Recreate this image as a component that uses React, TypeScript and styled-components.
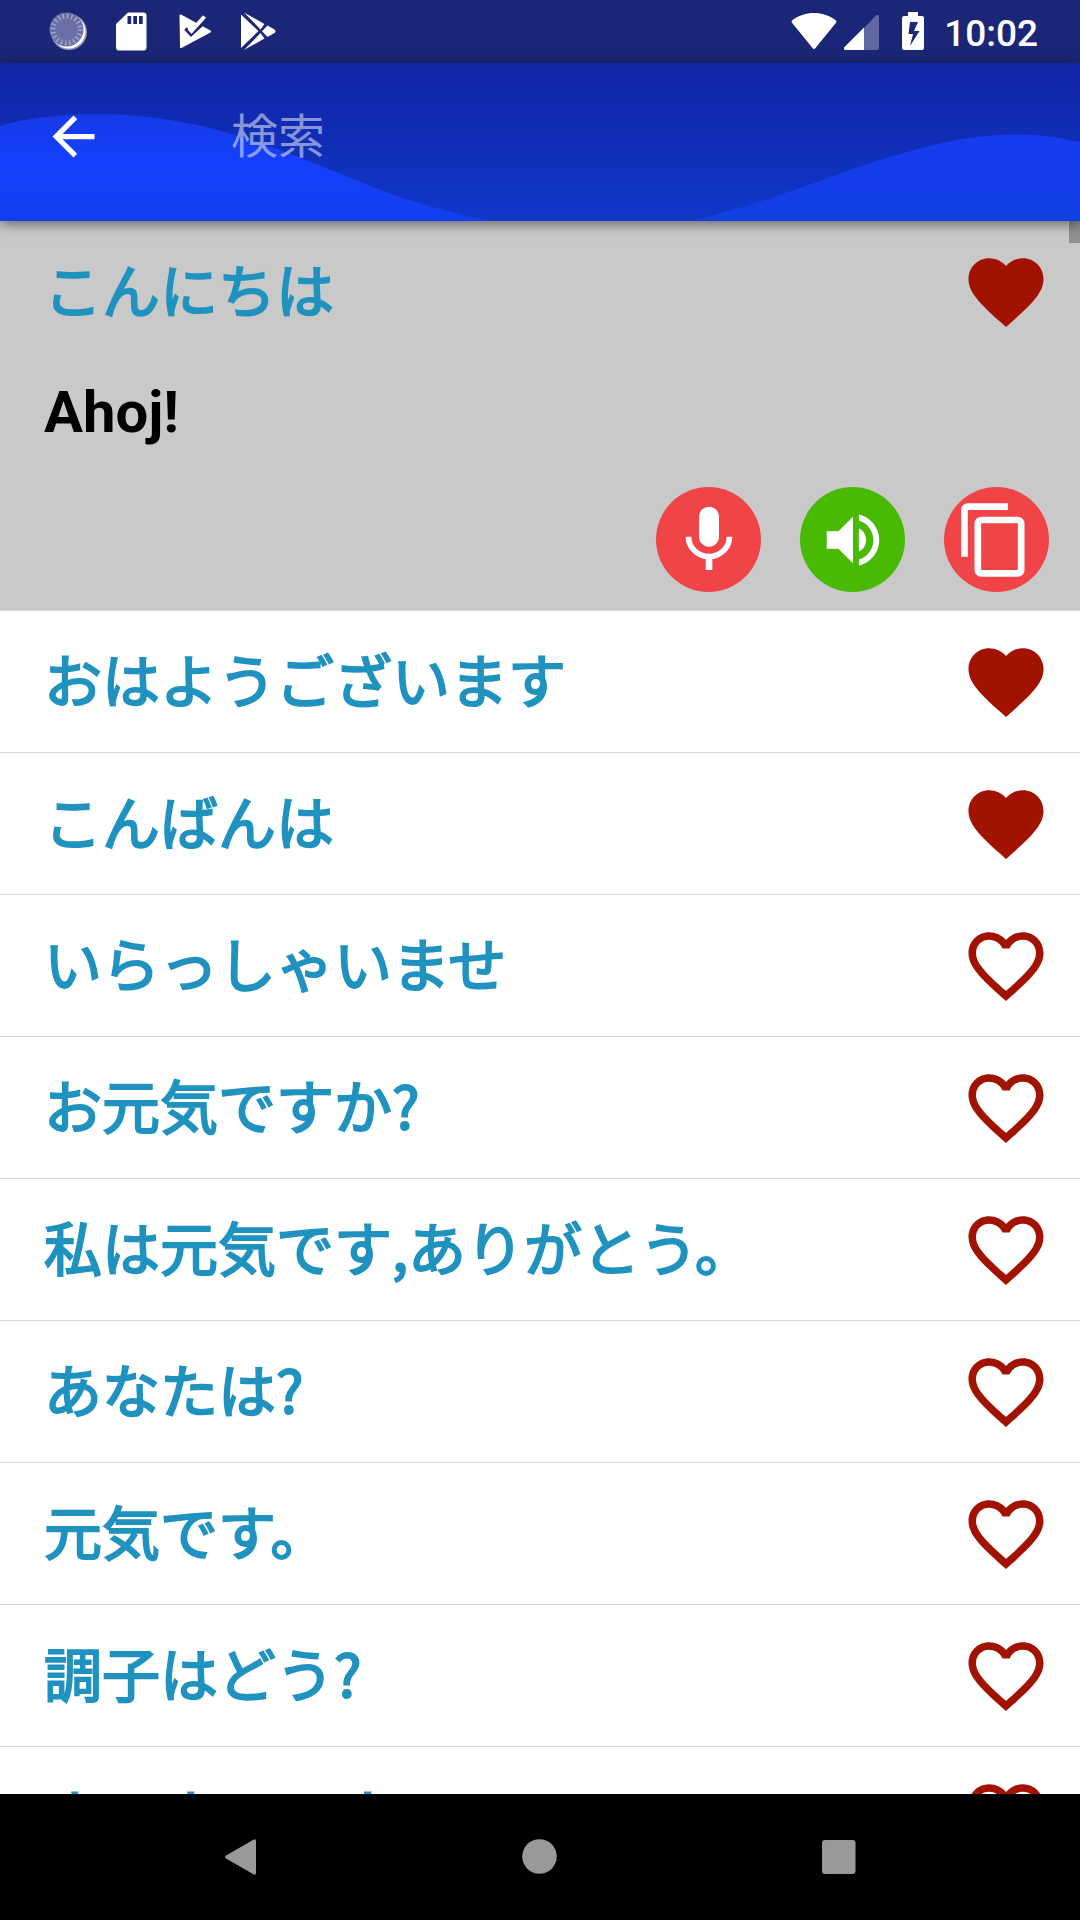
import React, { useState } from "react";
import styled, { createGlobalStyle } from "styled-components";

const GlobalStyle = createGlobalStyle`
  *, *::before, *::after { box-sizing: border-box; }
  body {
    margin: 0;
    background: #000;
    font-family: Roboto, "Noto Sans CJK JP", sans-serif;
  }
  button {
    margin: 0;
    padding: 0;
    border: 0;
    background: none;
    font: inherit;
    color: inherit;
    cursor: pointer;
  }
  svg { display: block; flex: none; }
`;

const Screen = styled.div`
  display: flex;
  flex-direction: column;
  height: 100vh;
  overflow: hidden;
  background: #fff;
`;

const StatusBar = styled.div`
  display: flex;
  flex: none;
  justify-content: space-between;
  align-items: center;
  height: 63px;
  padding: 0 42px 0 37px;
  background: #1b2676;
  color: #fff;
`;

const StatusGroup = styled.div<{ $gap: number }>`
  display: flex;
  align-items: center;
  gap: ${(p) => p.$gap}px;
`;

const Clock = styled.time`
  padding-top: 4px;
  font-size: 37px;
  line-height: 44px;
  font-weight: 500;
`;

const AppBar = styled.header`
  position: relative;
  z-index: 2;
  flex: none;
  height: 158px;
  background: linear-gradient(#1024a6, #1137c8);
  box-shadow: 0 3px 12px rgba(0, 0, 0, 0.5);
`;

const Wave = styled.svg`
  position: absolute;
  inset: 0;
  width: 100%;
  height: 100%;
`;

const Toolbar = styled.div`
  position: relative;
  display: flex;
  align-items: center;
  gap: 126px;
  height: 147px;
  padding: 0 42px;
`;

const SearchInput = styled.input`
  flex: 1;
  min-width: 0;
  height: 84px;
  padding: 0 0 8px;
  border: 0;
  outline: 0;
  background: transparent;
  color: #fff;
  font-family: "Noto Sans CJK JP", sans-serif;
  font-size: 47px;
  &::placeholder { color: rgba(255, 255, 255, 0.5); opacity: 1; }
`;

const ListArea = styled.main`
  position: relative;
  flex: 1;
  min-height: 0;
  overflow: hidden;
`;

const PhraseList = styled.ul`
  margin: 0;
  padding: 0;
  list-style: none;
`;

const PhraseItem = styled.li<{ $open: boolean }>`
  border-bottom: 1px solid #d7d7d7;
  background: ${(p) => (p.$open ? "#c9c9c9" : "#fff")};
`;

const PhraseRow = styled.div`
  display: flex;
  align-items: center;
  justify-content: space-between;
  height: 141px;
  padding: 0 29px 0 44px;
`;

const PhraseButton = styled.button`
  flex: 1;
  padding-bottom: 8px;
  text-align: left;
  color: #2092bf;
  font-family: "Noto Sans CJK JP", sans-serif;
  font-size: 58px;
  line-height: 84px;
  font-weight: 400;
  -webkit-text-stroke: 2px #2092bf;
`;

const Translation = styled.p`
  margin: 0;
  padding: 16px 44px 0;
  color: #000;
  font-size: 58px;
  line-height: 68px;
  font-weight: 700;
`;

const Actions = styled.div`
  display: flex;
  justify-content: flex-end;
  gap: 39px;
  padding: 41px 31px 18px;
`;

const RoundButton = styled.button<{ $color: string }>`
  display: grid;
  place-items: center;
  width: 105px;
  height: 105px;
  border-radius: 50%;
  background: ${(p) => p.$color};
`;

const ScrollThumb = styled.div`
  position: absolute;
  top: 0;
  right: 0;
  width: 11px;
  height: 22px;
  background: #909090;
`;

const NavBar = styled.nav`
  display: flex;
  flex: none;
  height: 126px;
  padding: 0 92px;
  background: #000;
`;

const NavButton = styled.button`
  display: grid;
  flex: 1;
  place-items: center;
`;

const HEART_FULL =
  "M12 21.35l-1.45-1.32C5.4 15.36 2 12.28 2 8.5 2 5.42 4.42 3 7.5 3c1.74 0 3.41.81 4.5 2.09C13.09 3.81 14.76 3 16.5 3 19.58 3 22 5.42 22 8.5c0 3.78-3.4 6.86-8.55 11.54L12 21.35z";
const HEART_OUTLINE =
  "M16.5 3c-1.74 0-3.41.81-4.5 2.09C10.91 3.81 9.24 3 7.5 3 4.42 3 2 5.42 2 8.5c0 3.78 3.4 6.86 8.55 11.54L12 21.35l1.45-1.32C18.6 15.36 22 12.28 22 8.5 22 5.42 19.58 3 16.5 3zm-4.4 15.55l-.1.1-.1-.1C7.14 14.24 4 11.39 4 8.5 4 6.5 5.5 5 7.5 5c1.54 0 3.04.99 3.57 2.36h1.87C13.46 5.99 14.96 5 16.5 5c2 0 3.5 1.5 3.5 3.5 0 2.89-3.14 5.74-7.9 10.05z";
const MIC =
  "M12 14c1.66 0 2.99-1.34 2.99-3L15 5c0-1.66-1.34-3-3-3S9 3.34 9 5v6c0 1.66 1.34 3 3 3zm5.3-3c0 3-2.54 5.1-5.3 5.1S6.7 14 6.7 11H5c0 3.41 2.72 6.23 6 6.72V21h2v-3.28c3.28-.48 6-3.3 6-6.72h-1.7z";
const VOLUME =
  "M3 9v6h4l5 5V4L7 9H3zm13.5 3c0-1.77-1.02-3.29-2.5-4.03v8.05c1.48-.73 2.5-2.25 2.5-4.02zM14 3.23v2.06c2.89.86 5 3.54 5 6.71s-2.11 5.85-5 6.71v2.06c4.01-.91 7-4.49 7-8.77s-2.99-7.86-7-8.77z";
const COPY =
  "M16 1H4c-1.1 0-2 .9-2 2v14h2V3h12V1zm3 4H8c-1.1 0-2 .9-2 2v14c0 1.1.9 2 2 2h11c1.1 0 2-.9 2-2V7c0-1.1-.9-2-2-2zm0 16H8V7h11v14z";
const BACK = "M20 11H7.83l5.59-5.59L12 4l-8 8 8 8 1.41-1.41L7.83 13H20v-2z";

type IconProps = { path: string; size: number; color?: string; viewBox?: string };

const Icon = ({ path, size, color = "#fff", viewBox = "0 0 24 24" }: IconProps) => (
  <svg width={size} height={size} viewBox={viewBox} fill={color} aria-hidden="true">
    <path d={path} />
  </svg>
);

const SyncIcon = () => (
  <svg width="63" height="63" viewBox="0 0 63 63" aria-hidden="true">
    <circle cx="32" cy="32" r="18" fill="#8f95bd" />
    <circle cx="31.5" cy="31.5" r="17" fill="#fff" />
    <circle cx="29.5" cy="29.5" r="17" fill="#6a70a5" />
    <circle cx="29.5" cy="29.5" r="13.5" fill="none" stroke="#a4a8c9" strokeWidth="5" strokeDasharray="1.4 2.84" />
  </svg>
);

const CardIcon = () => (
  <svg width="63" height="63" viewBox="0 0 63 63" aria-hidden="true">
    <path
      fill="#fff"
      fillRule="evenodd"
      d="M28 12.5H43.5a3 3 0 0 1 3 3V47.5a3 3 0 0 1-3 3H19a3 3 0 0 1-3-3V24zM27.5 16v8h3.7v-8zM33.3 16v8h3.7v-8zM39 16v8h3.7v-8z"
    />
  </svg>
);

const PlayCheckIcon = () => (
  <svg width="63" height="63" viewBox="0 0 63 63" aria-hidden="true">
    <path d="M17.5 15.5L47 31.5 18 47z" fill="#fff" stroke="#fff" strokeWidth="2" strokeLinejoin="round" />
    <path d="M33 22L45 12 50 26 42 26z" fill="#1b2676" />
    <path d="M22.5 28.5L28 34.5 44.5 19.5" fill="none" stroke="#1b2676" strokeWidth="3.5" />
    <path d="M26 28L28.5 31 41.5 16.5" fill="none" stroke="#fff" strokeWidth="4" />
  </svg>
);

const PlayIcon = () => (
  <svg width="63" height="63" viewBox="0 0 63 63" aria-hidden="true">
    <path d="M15 14.5L32.5 31 15 48z" fill="#fff" />
    <path d="M18 12.5L38.5 24 34.5 29.5zM18 50L38.5 38.5 34.5 33z" fill="#fff" />
    <path d="M41.5 25.5L48.5 29.5Q50.5 31.2 48.5 33L41.5 37 36 31.2z" fill="#fff" />
  </svg>
);

const WifiIcon = () => (
  <svg width="46" height="63" viewBox="0 0 46 63" aria-hidden="true">
    <path fill="#fff" d="M1 20.5C13 10.500 33 10.5 45 20.5Q46 21.5 45 22.8L24.5 48Q23 50 21.5 48L1 22.8Q0 21.500 1 20.5z" />
  </svg>
);

const SignalIcon = () => (
  <svg width="35" height="63" viewBox="0 0 35 63" aria-hidden="true">
    <path fill="#6067a1" d="M20 28L31.5 16Q35 13 35 17V48Q35 50 33 50H20z" />
    <path fill="#fff" d="M20 27.5V50H1.5Q-1 49.5 .5 47z" />
  </svg>
);

const BatteryIcon = () => (
  <svg width="51" height="63" viewBox="0 0 51 63" aria-hidden="true">
    <path
      fill="#fff"
      fillRule="evenodd"
      d="M22 12h10v4h4q2 0 2 2v30q0 2-2 2H18q-2 0-2-2V18q0-2 2-2h4zM24 22L22.5 34H27L24 46 33.5 31H28L32 22z"
    />
  </svg>
);

type Phrase = { text: string; translation?: string; favorite: boolean };

const PHRASES: Phrase[] = [
  { text: "こんにちは", translation: "Ahoj!", favorite: true },
  { text: "おはようございます", favorite: true },
  { text: "こんばんは", favorite: true },
  { text: "いらっしゃいませ", favorite: false },
  { text: "お元気ですか?", favorite: false },
  { text: "私は元気です,ありがとう。", favorite: false },
  { text: "あなたは?", favorite: false },
  { text: "元気です。", favorite: false },
  { text: "調子はどう?", favorite: false },
  { text: "まぁまぁです。", favorite: false },
];

export default function App() {
  const [favorites, setFavorites] = useState(PHRASES.map((p) => p.favorite));
  const [query, setQuery] = useState("");

  const toggle = (index: number) =>
    setFavorites((list) => list.map((on, i) => (i === index ? !on : on)));

  return (
    <>
      <GlobalStyle />
      <Screen lang="ja">
        <StatusBar>
          <StatusGroup $gap={0}>
            <SyncIcon />
            <CardIcon />
            <PlayCheckIcon />
            <PlayIcon />
          </StatusGroup>
          <StatusGroup $gap={7}>
            <WifiIcon />
            <SignalIcon />
            <BatteryIcon />
            <Clock>10:02</Clock>
          </StatusGroup>
        </StatusBar>

        <AppBar>
          <Wave viewBox="0 0 1080 158" preserveAspectRatio="none" aria-hidden="true">
            <defs>
              <linearGradient id="waveLeft" x1="0" y1="0" x2="0" y2="1">
                <stop offset="0" stopColor="#153ae8" />
                <stop offset="0.5" stopColor="#1540fd" />
                <stop offset="1" stopColor="#123fea" />
              </linearGradient>
              <linearGradient id="waveRight" x1="0" y1="0" x2="0" y2="1">
                <stop offset="0" stopColor="#153bf0" />
                <stop offset="1" stopColor="#123fe3" />
              </linearGradient>
            </defs>
            <path
              fill="url(#waveLeft)"
              d="M0 63C30 54 65 51 97 51C200 51 280 86 360 119C410 139 450 150 493 158H0z"
            />
            <path
              fill="url(#waveRight)"
              d="M690 158C780 137 850 104 897 92C940 79 975 71.5 1016 71.5C1040 71.5 1060 75 1080 79V158z"
            />
          </Wave>
          <Toolbar>
            <button type="button" aria-label="戻る">
              <Icon path={BACK} size={63} />
            </button>
            <SearchInput
              type="text"
              aria-label="検索"
              placeholder="検索"
              value={query}
              onChange={(e) => setQuery(e.target.value)}
            />
          </Toolbar>
        </AppBar>

        <ListArea>
          <PhraseList>
            {PHRASES.map((phrase, i) => (
              <PhraseItem key={phrase.text} $open={Boolean(phrase.translation)}>
                <PhraseRow>
                  <PhraseButton type="button">{phrase.text}</PhraseButton>
                  <button
                    type="button"
                    aria-label="お気に入り"
                    aria-pressed={favorites[i]}
                    onClick={() => toggle(i)}
                  >
                    <Icon path={favorites[i] ? HEART_FULL : HEART_OUTLINE} size={90} color="#a21200" />
                  </button>
                </PhraseRow>
                {phrase.translation && (
                  <>
                    <Translation lang="cs">{phrase.translation}</Translation>
                    <Actions>
                      <RoundButton type="button" $color="#f04448" aria-label="録音">
                        <Icon path={MIC} size={80} />
                      </RoundButton>
                      <RoundButton type="button" $color="#48ba04" aria-label="再生">
                        <Icon path={VOLUME} size={70} />
                      </RoundButton>
                      <RoundButton type="button" $color="#f04448" aria-label="コピー">
                        <Icon path={COPY} size={80} viewBox="0.75 0 24 24" />
                      </RoundButton>
                    </Actions>
                  </>
                )}
              </PhraseItem>
            ))}
          </PhraseList>
          <ScrollThumb />
        </ListArea>

        <NavBar>
          <NavButton type="button" aria-label="戻る">
            <svg width="36" height="38" viewBox="0 0 36 38" aria-hidden="true">
              <path fill="#999" d="M30 2Q33 0 33 3.5V34.5Q33 38 30 36L3 20.5Q1 19 3 17.5z" />
            </svg>
          </NavButton>
          <NavButton type="button" aria-label="ホーム">
            <svg width="36" height="36" viewBox="0 0 36 36" aria-hidden="true">
              <circle cx="17.5" cy="17.5" r="17.3" fill="#999" />
            </svg>
          </NavButton>
          <NavButton type="button" aria-label="履歴">
            <svg width="34" height="34" viewBox="0 0 34 34" aria-hidden="true">
              <rect width="33.5" height="34" rx="3" fill="#999" />
            </svg>
          </NavButton>
        </NavBar>
      </Screen>
    </>
  );
}
